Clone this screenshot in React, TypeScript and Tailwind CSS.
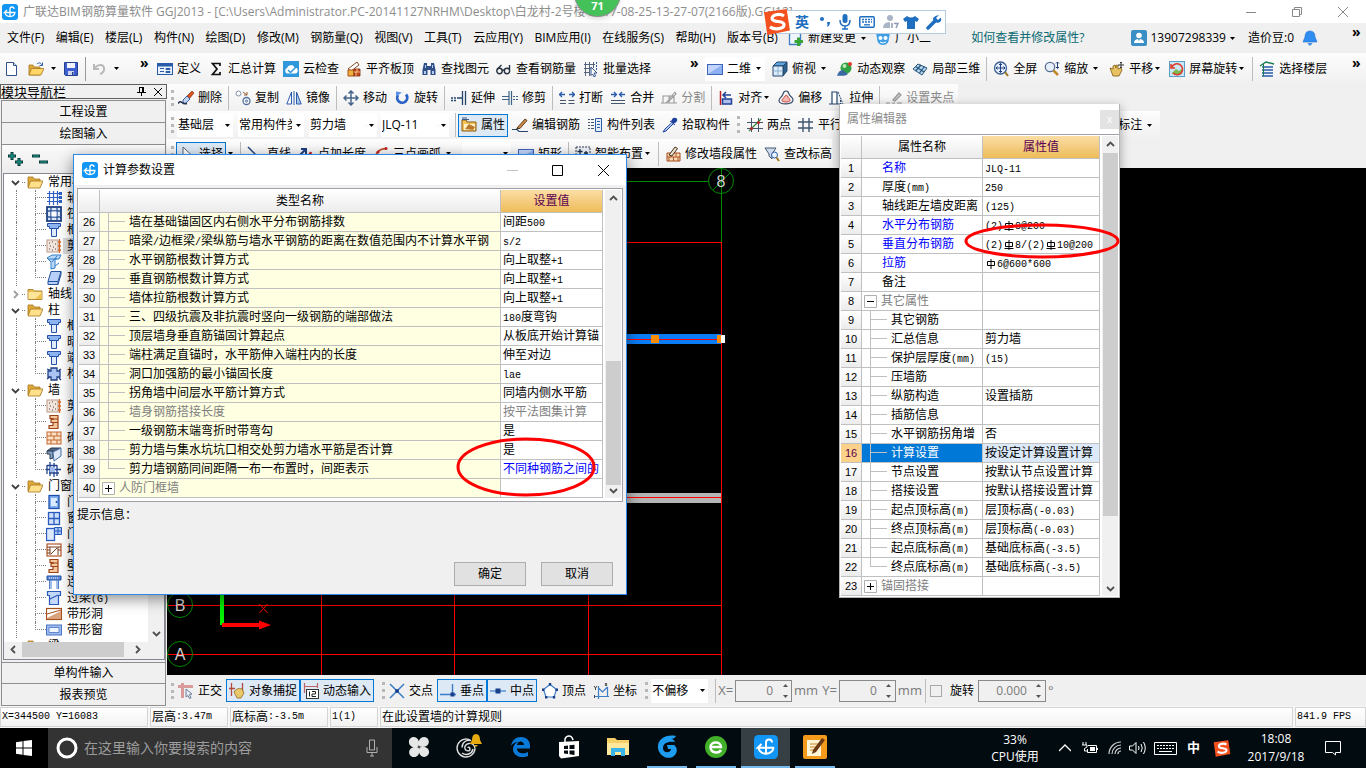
import React from 'react';

const BLUE = '#2a5caa';

const icons: Record<string, React.ReactNode> = {
  app: (
    <>
      <rect width="16" height="16" rx="3" fill="#1296f5" />
      <path d="M8 12.5V5a2 2 0 0 1 4 0M5 6L2.500 8.500H13.500M3 8.500c.8 5.300 9.200 5.300 10 0" fill="none" stroke="#fff" strokeWidth="1.3" />
    </>
  ),
  doc: (
    <>
      <path d="M2.5 1.5h7l3 3v10h-10z" fill="#fff" stroke="#31508a" />
      <path d="M9.5 1.5v3h3" fill="#cfdcf2" stroke="#31508a" />
    </>
  ),
  folderOpen: (
    <>
      <path d="M1 3h5l1 2h6v8H1z" fill="#e0a83a" stroke="#a5761c" strokeWidth=".8" />
      <path d="M3.5 7H16l-3 7H1z" fill="#ffe08a" stroke="#a5761c" strokeWidth=".8" />
    </>
  ),
  openFile: (
    <>
      <path d="M1 4h4l1 2h6v8H1z" fill="#e0a83a" stroke="#a5761c" strokeWidth=".8" />
      <path d="M3.5 7.5H16l-3 6.5H1z" fill="#ffd667" stroke="#a5761c" strokeWidth=".8" />
      <path d="M9 3c2-2 4-1 5 1M14.5 1.5v3h-3" fill="none" stroke={BLUE} />
    </>
  ),
  folder: (
    <>
      <path d="M1 3.5h5L7.5 5H15v8.500H1z" fill="#e9bd52" stroke="#a5761c" strokeWidth=".8" />
      <path d="M1.5 6h13v7h-13z" fill="#ffe59a" />
      <path d="M8 13l6.500-6v6z" fill="#efc04e" />
    </>
  ),
  save: (
    <>
      <path d="M1.5 1.5h13v13h-12l-1-1z" fill="#3d5fd0" stroke="#27408f" />
      <path d="M4 2h8v5H4z" fill="#f2f5ff" />
      <path d="M5 10h6v4H5z" fill="#cfd6ee" />
      <path d="M9 11h1.500v3H9z" fill="#27408f" />
    </>
  ),
  undo: <path d="M2 3v5h5M2.500 8C4 4 11 2 12 7c.5 3-1 5-4 6" fill="none" stroke="#b9b9b9" strokeWidth="2" />,
  define: (
    <>
      <rect x=".5" y="2.5" width="15" height="11" fill="#eaf1fb" stroke={BLUE} />
      <path d="M1 3h14v2.500H1z" fill={BLUE} />
      <path d="M3 7.500h4M3 10.500h4M9 7.500h4v1H9zM9 10.500h4v1H9z" stroke={BLUE} />
    </>
  ),
  sigma: <path d="M12 5V2.500H4.500L9 8l-4.500 5.500H12V11" fill="none" stroke="#111" strokeWidth="1.7" />,
  cloud: (
    <>
      <rect width="16" height="16" fill="#2f97dc" />
      <path d="M4 12.500a3 3 0 0 1 0-5.500 4 4 0 0 1 7.500-.5 3 3 0 0 1 .5 6z" fill="#fff" />
      <path d="M5 9l2.500 2.500L13 6" fill="none" stroke="#2f97dc" strokeWidth="1.5" />
    </>
  ),
  flush: (
    <>
      <path d="M2 8L11 1l2 3-8 6z" fill="#fff" stroke="#8a4b1e" />
      <path d="M2 9h6v6H2z" fill="#f0b13c" stroke="#a5501b" />
      <path d="M8 8h6v7H8z" fill="#c6481d" stroke="#7a2b10" strokeWidth=".8" />
      <path d="M8 11h6M11 8v3M10 11v4" stroke="#ffd8a0" strokeWidth=".8" />
    </>
  ),
  find: (
    <>
      <path d="M3 2h3v3h4V2h3l1.500 7v5H9.500V9h-3v5h-5V9z" fill="#2f4f86" />
      <path d="M3 10h2v3H3zM11 10h2v3h-2zM4 4h1v3H4zM11 4h1v3h-1z" fill="#b7cbef" />
    </>
  ),
  glasses: (
    <g fill="none" stroke="#26323f" strokeWidth="1.4">
      <circle cx="3.5" cy="10" r="2.7" />
      <circle cx="11" cy="10" r="2.7" />
      <path d="M6 9.500q1-1 2.500 0M1.500 8L5.500 4M13.500 9V4" />
    </g>
  ),
  batch: (
    <>
      <path d="M2.500 1v14M6.500 1v14M10.500 1v6M1 3.500h11M1 7.500h8M1 11.500h6" stroke="#55657c" fill="none" />
      <path d="M8 6l6 6h-3l1.500 3-1.500.8L9.500 13 8 14.500z" fill="#fff" stroke="#31508a" />
      <path d="M13.500 1v9" stroke={BLUE} strokeDasharray="2 1" />
    </>
  ),
  rect: (
    <>
      <rect x=".5" y="3.5" width="15" height="10" fill="#8db0f2" stroke="#3d62b8" />
      <path d="M1 13L15 4H1z" fill="#cfe0ff" opacity=".8" />
    </>
  ),
  cube: (
    <>
      <path d="M1 5l4-4h10l-4 4z" fill="#5fa4dc" stroke="#24466b" />
      <path d="M11 5l4-4v9l-4 5z" fill="#2c628f" stroke="#24466b" />
      <path d="M1 5h10v10H1z" fill="#dcecfa" stroke="#24466b" />
      <path d="M6 5v10M1 10h10" stroke="#7fa6c9" strokeWidth=".8" />
    </>
  ),
  orbit: (
    <>
      <circle cx="9" cy="7" r="5.5" fill="#2fa043" />
      <circle cx="7.5" cy="5" r="2" fill="#b9ecb4" />
      <path d="M0 15c1-4 3-6 6-6l5 4c-4 3-8 1-11 2z" fill="#3b6aa3" />
      <circle cx="13" cy="3" r="2" fill="#e23b2b" />
    </>
  ),
  local3d: (
    <>
      <path d="M1 8l5-5 9 4-5 7z" fill="#b5d6ec" stroke="#27557f" />
      <path d="M3.500 5.500l8.500 5.500M9 4l-5.500 6M12.500 5.500L7.500 12" stroke="#27557f" strokeWidth="1.2" />
    </>
  ),
  full: (
    <>
      <circle cx="7.5" cy="7" r="6" fill="#e6effb" stroke="#3c5f93" strokeWidth="1.3" />
      <path d="M7.500 2.500v9M3 7h9M6 4l1.500-1.500L9 4M6 10l1.500 1.500L9 10M4.500 5.500L3 7l1.500 1.500M10.500 5.500L12 7l-1.500 1.500" fill="none" stroke="#1f3f7d" />
      <path d="M12 11l3 4" stroke="#9a7326" strokeWidth="2" />
    </>
  ),
  zoom: (
    <>
      <circle cx="6" cy="6" r="4.7" fill="#e6effb" stroke="#5a6f8f" strokeWidth="1.3" />
      <path d="M9.500 9.500L14 14" stroke="#c08a2b" strokeWidth="2.5" />
      <path d="M13.500 1v6M12 2.500L13.500 1 15 2.500M12 6l1.500 1.500L15 6" fill="none" stroke="#1f3f7d" />
    </>
  ),
  pan: (
    <>
      <path d="M1 7l3 1V5l2-1 1 3V4l2 .5V8l3-1 1 2-3 6H4z" fill="#e8c262" stroke="#8a6a20" strokeWidth=".9" />
      <path d="M12 1v6M9 4h6M11 2l1-1 1 1M11 6l1 1 1-1" fill="none" stroke="#333" />
    </>
  ),
  rotScreen: (
    <>
      <rect x=".5" y=".5" width="15" height="15" fill="#c9e5f6" stroke="#5b9fc9" />
      <path d="M3 12l4-4 3 2 3-2v5H3z" fill="#7cba4e" />
      <path d="M3 6a5.500 5.500 0 1 1 1 6M2 3v4h4" fill="none" stroke="#e0392b" strokeWidth="1.6" />
    </>
  ),
  floors: (
    <>
      <path d="M1 5l6-4 8 2" fill="none" stroke="#1a7d4f" strokeWidth="1.4" />
      <path d="M3 6h11M3 9h11M3 12h11M3 15h11" stroke={BLUE} strokeWidth="1.5" />
      <path d="M4.500 3v12" stroke="#1a7d4f" />
    </>
  ),
  erase: (
    <>
      <path d="M9 6l5-5 2 2-5 6z" fill="#d9541e" stroke="#7d3515" strokeWidth=".7" />
      <path d="M5 10l4-4 3 3-4 4q-2 1-3-1z" fill="#bfd4f3" stroke="#31508a" strokeWidth=".9" />
      <path d="M0 13.500q2-3 4-1t5 1" fill="none" stroke="#26324f" strokeWidth="1.5" />
    </>
  ),
  copy: (
    <g fill="none">
      <circle cx="3.5" cy="3.5" r="2.5" stroke="#8392ab" />
      <circle cx="11.5" cy="11" r="3.5" stroke="#51709f" strokeWidth="1.3" />
      <circle cx="11.5" cy="11" r="1" stroke="#51709f" />
      <path d="M8 2l4 3M12 2v3H9" stroke="#9a5a2f" />
    </g>
  ),
  mirror: (
    <>
      <path d="M5.500 2v12H.8z" fill="#fff" stroke={BLUE} />
      <path d="M10.500 2v12h4.700z" fill="#a9c2ea" stroke={BLUE} />
      <path d="M8 1v14" stroke={BLUE} />
    </>
  ),
  move: (
    <path d="M8 1v14M1 8h14M5.500 3.500L8 1l2.500 2.500M5.500 12.500L8 15l2.500-2.500M3.500 5.500L1 8l2.500 2.500M12.500 5.500L15 8l-2.500 2.500" fill="none" stroke="#46658c" strokeWidth="1.5" />
  ),
  rotate: (
    <>
      <path d="M12 4.500a5 5 0 1 1-8 .5" fill="none" stroke="#2b63c8" strokeWidth="2.8" />
      <path d="M8 2.500l-6-1v5z" fill="#5a8fe8" />
    </>
  ),
  extend: (
    <path d="M14.500 1v14M11.500 1v14M0 8h2M3 8h2M6 8h5M0 10.500h2M3 10.500h2" stroke="#24466b" strokeWidth="1.3" fill="none" />
  ),
  trim: (
    <path d="M7 1v14M9.500 1v14M0 6.500h6.500M0 9.500h6.500M11 6.500h2M14 6.500h2M11 9.500h2M14 9.500h2" stroke="#3d6486" strokeWidth="1.2" fill="none" />
  ),
  brk: (
    <>
      <path d="M0 4.500h6M10 4.500h6M3 2L.5 4.500 3 7M13 2l2.500 2.500L13 7" fill="none" stroke={BLUE} strokeWidth="1.3" />
      <path d="M1 10.500h6M9.500 10.500h6M1 13.500h6M9.500 13.500h6" stroke="#44566e" fill="none" />
    </>
  ),
  merge: (
    <>
      <path d="M1 4.500h5M10 4.500h5M4 2l2.500 2.500L4 7M12 2L9.500 4.500 12 7" fill="none" stroke={BLUE} strokeWidth="1.3" />
      <path d="M1 10.500h14M1 13.500h14" stroke="#44566e" fill="none" />
    </>
  ),
  split: (
    <path d="M2 6h11v7H2zM0 13h16M5 13l9-11M8 6v7M14 2l1 2-8 8" fill="none" stroke="#9a9a9a" strokeWidth="1.1" />
  ),
  align: (
    <>
      <path d="M2.500 1v14" stroke="#c01f1f" strokeWidth="1.5" />
      <path d="M4.500 9h9v5h-9z" fill="#aebfea" stroke="#20429b" strokeWidth="1.5" />
      <path d="M5 5h8M8 2L5 5l3 3" fill="none" stroke="#20429b" strokeWidth="1.5" />
    </>
  ),
  offset: (
    <>
      <path d="M1 11C1 7 4 8 5 4c1-4 5-4 6 0 1 3 4 3 4 6 0 5-14 5-14 1z" fill="none" stroke="#3a4f6d" strokeWidth="1.2" />
      <path d="M4 10.500c0-2 2-2 3-4.500 1-1 2-1 2.500 0 .5 2 2.500 2.500 2.500 4.500 0 2-8 2-8 0z" fill="#f2b7b3" stroke="#c9463f" />
    </>
  ),
  stretch: (
    <>
      <path d="M3 14V2h5v12M0 14h13" fill="#fff" stroke="#24466b" strokeWidth="1.2" />
      <path d="M9 2l5 12M11.500 10v4" stroke="#24466b" strokeDasharray="2 1" fill="none" />
    </>
  ),
  grip: (
    <path d="M0 13h4M6 13h3M11 13h5M7 10l6-7 2 2-6 6z" stroke="#999" fill="#ccc" strokeWidth="1.2" />
  ),
  props: (
    <>
      <path d="M1 3h4l1 2h9v9H1z" fill="#f5c25a" stroke="#8a5a14" />
      <path d="M3 7h11v6H3z" fill="#fff1c4" />
      <path d="M4 12l4-5 6 3-2 3z" fill="#b9792d" />
      <path d="M1 2.500h7M1 1h5" stroke="#3a5a86" />
    </>
  ),
  editBar: (
    <>
      <path d="M0 12.500h5l2 2h9" stroke="#24466b" fill="none" strokeWidth="1.2" />
      <path d="M5 11l8-9 2 1.500-7 8z" fill="#c98c4a" stroke="#5b3412" strokeWidth=".9" />
      <path d="M5 11l3 .5L3 13z" fill="#222" />
    </>
  ),
  list: (
    <>
      <path d="M8.500 1.500h6v13h-6z" fill="#e6eefb" stroke={BLUE} />
      <path d="M10 4.500h3M10 7.500h3M10 10.500h3" stroke={BLUE} />
      <path d="M1 2.500h2M4 2.500h3M1 5.500h2M4 5.500h3M1 8.500h2M4 8.500h3M1 11.500h2M4 11.500h3" stroke="#44566e" />
    </>
  ),
  picker: (
    <>
      <path d="M9 4l2-3q3-1 4 1 1 2-2 4l-2 1z" fill="#20429b" />
      <path d="M8 4l5 4M9.500 6L3 12l-2 3 3-1 7-7" fill="#b9d2f2" stroke="#20429b" />
    </>
  ),
  twoPt: (
    <>
      <path d="M4.500 1v14M11.500 1v14M0 5.500h16M0 11.500h16" stroke="#44566e" />
      <path d="M2 14L14 2" stroke="#2c8a3d" strokeWidth="1.3" />
      <circle cx="11.5" cy="5.5" r="1.5" fill="#c01f1f" />
      <circle cx="4.5" cy="11.5" r="1.5" fill="#c01f1f" />
    </>
  ),
  parallel: <path d="M5 1v14M11 1v14M0 5h15M0 11h15" stroke="#3f5570" strokeWidth="1.4" />,
  pointer: <path d="M4 1v12l3-3 2 5 2-1-2-4.500h4z" fill="#fff" stroke="#55657c" />,
  line: <path d="M1 1l13 13" stroke="#1f3f7d" strokeWidth="1.5" />,
  addLen: (
    <>
      <path d="M2 9l6-6M3 3h5v5" fill="none" stroke="#1f3f7d" strokeWidth="2" />
      <path d="M13 6v8M11 8l2-2" stroke="#c01f1f" strokeWidth="1.5" />
    </>
  ),
  arc: (
    <>
      <path d="M2 14C2 7 6 3 13 2.500" fill="none" stroke="#c0502f" strokeWidth="1.5" />
      <circle cx="13" cy="2.5" r="1.5" fill="#c01f1f" />
      <circle cx="5" cy="6" r="1.5" fill="#c01f1f" />
    </>
  ),
  smart: (
    <>
      <rect x="1" y="1" width="14" height="14" fill="#eef2f8" stroke="#333f52" strokeDasharray="2 1" />
      <path d="M5 3v5M2.500 5.500h5M11 5v4M9 7h4M6 10v4M4 12h4" stroke="#1c2d4c" strokeWidth="1.3" />
    </>
  ),
  wallEdit: (
    <>
      <path d="M2 7h13v8H2z" fill="#fbd9b4" stroke="#a34c1b" />
      <path d="M2 11h13M6 7v4M11 7v4M4 11v4M8.500 11v4M13 11v4" stroke="#a34c1b" strokeWidth=".9" />
      <path d="M4 9l6-8 2.500 1.500L7 10z" fill="#e8e0cf" stroke="#4a2f16" />
    </>
  ),
  elev: (
    <>
      <path d="M1 2h11L8 8v5l-3-3V8z" fill="#cfdbee" stroke="#44566e" />
      <circle cx="10.5" cy="9" r="3" fill="#eaf3ff" stroke={BLUE} />
      <path d="M12.500 11.500L15 15" stroke="#a5761c" strokeWidth="2" />
    </>
  ),
  newChange: (
    <>
      <path d="M1.500 1.500h9l2 2v11h-11z" fill="#eef5fd" stroke="#3b7dbf" strokeWidth="1.3" />
      <path d="M9 7.500h3V10h3v3h-3v3H9v-3H6.500v-3H9z" fill="#35a535" />
    </>
  ),
  mascot: (
    <>
      <path d="M1 3l4 1q3-1 6 0l4-1-1 5q0 7-6 7T2 8z" fill="#3f9fe6" />
      <circle cx="5.5" cy="8" r="2" fill="#fff" />
      <circle cx="10.5" cy="8" r="2" fill="#fff" />
      <path d="M5 12q3 2 6 0" stroke="#fff" fill="none" />
    </>
  ),
  user: (
    <>
      <rect width="16" height="16" rx="2" fill="#3a8fc4" />
      <circle cx="8" cy="5.5" r="2.8" fill="#fff" />
      <path d="M3 13q0-4 5-4t5 4z" fill="#fff" />
      <path d="M7 9l1 2 1-2z" fill="#3a8fc4" />
    </>
  ),
  bell: <path d="M8 1q5 0 5 6l2 5H1l2-5q0-6 5-6zM6 13.500h4L8 15.500z" fill="#2f8df0" stroke="#1d6fd0" strokeWidth=".6" />,
  ortho: (
    <>
      <path d="M0 3.500h15M4.500 0v15" stroke="#d99a9a" strokeWidth="3" />
      <path d="M8 6l6 5-2.500.5L13 15l-1.500.5-1.500-3L8 14z" fill="#e9eef6" stroke="#6c7f9a" />
    </>
  ),
  snap: (
    <>
      <path d="M2.500 0v13M13.500 0v10M0 5.500h6" stroke="#b34a3f" strokeWidth="1.3" />
      <path d="M5 9q3-5 8-3l2 4-3 5H8z" fill="#eac76b" stroke="#8d6b21" strokeWidth=".8" />
    </>
  ),
  dynIn: (
    <>
      <path d="M1 3.500h14M1.500 0v10M14.500 0v5" stroke="#b66" strokeWidth="1.2" />
      <rect x="3.5" y="6.5" width="12" height="9" fill="#fff" stroke="#333" />
      <path d="M6.500 8.500v5M9 8.500h3.500V11H9v2.500h4" stroke="#222" fill="none" />
    </>
  ),
  cross: (
    <>
      <path d="M1 1l14 14M15 1L1 15" stroke="#3d7dc8" strokeWidth="1.5" />
      <circle cx="8" cy="8" r="2" fill="#173f8a" />
    </>
  ),
  perp: (
    <>
      <path d="M0 11.500h16M12.500 1v11" stroke="#3d7dc8" strokeWidth="1.4" />
      <rect x="10.5" y="9.5" width="4" height="4" fill="#173f8a" />
    </>
  ),
  mid: (
    <>
      <path d="M0 8h16" stroke="#5b93d6" strokeWidth="1.5" />
      <rect x="5.5" y="5.5" width="5" height="5" fill="#173f8a" />
    </>
  ),
  vertex: (
    <>
      <path d="M8 1.500l6.500 5L12 14H4L1.500 6.500z" fill="#fff" stroke="#3d7dc8" strokeWidth="1.2" />
      <path d="M6.800 0h2.400v2.400H6.800zM0 5.500h2.400v2.400H0zM13.500 5.500H16v2.400h-2.500zM3 13h2.400v2.400H3zM10.800 13h2.400v2.400h-2.400z" fill="#173f8a" />
    </>
  ),
  coord: (
    <>
      <path d="M5.500 3v13M2 13.500h14M5.500 5l4 4 5-5M14.500 4v10" fill="none" stroke="#3d7dc8" strokeWidth="1.2" />
      <path d="M1 3l1.500 2L4 3M2.500 5v2M1.500 12v3M12 0l2 3M14 0l-2 3" stroke="#333" fill="none" strokeWidth=".9" />
    </>
  ),
  axisNet: (
    <path d="M3.500 1v14M7.500 1v14M11.500 1v14M1 3.500h14M1 7.500h14M1 11.500h14M13.500 2.500h2v2h-2zM13.500 6.500h2v2h-2zM13.500 10.500h2v2h-2z" fill="none" stroke="#2f62c4" strokeWidth="1.2" />
  ),
  raft: (
    <>
      <rect x="1" y="1" width="14" height="14" fill="#dbe8fb" stroke="#1c3f80" strokeWidth="1.8" />
      <path d="M5 1v14M11 1v14M1 5h14M1 11h14" stroke="#2c5494" strokeWidth="1.3" />
      <rect x="5.5" y="5.5" width="5" height="5" fill="#fff" />
    </>
  ),
  column: (
    <>
      <path d="M1.500 1.500h13v3h-2v2h-9v-2h-2z" fill="#8eb4f4" stroke="#2450a8" />
      <path d="M5.500 6.500h5v8h-5z" fill="#dfeafd" stroke="#2450a8" />
    </>
  ),
  shear: (
    <>
      <rect x="1" y="2" width="11" height="12" fill="#f5e6dd" stroke="#b99a8a" />
      <path d="M3 5h1M6 4h1M9 6h1M4 8h1M7 9h1M3 11h1M9 11h1M6 12h1" stroke="#444" strokeWidth="1.2" />
      <path d="M13.500 1v14M12 4h3M12 8h3M12 12h3" stroke="#d26a2a" strokeWidth="1.3" />
    </>
  ),
  beam: (
    <>
      <path d="M1 4l5-3h9l-2 4H9v9l-4 1V8z" fill="#bcd9f7" stroke="#2f7cc8" />
      <path d="M2 5h9M6 8l5-6M9 12l4-3" stroke="#2f7cc8" />
    </>
  ),
  slab: <path d="M5 1.500h10l-3 10H2zM2 11.500v3h10v-3M12 14.500l3-10v-3" fill="#b8d0fa" stroke="#24509c" />,
  strCol: (
    <path d="M5 2h6v3h3v6h-3v3H5v-3H2V5h3zM1 3l3 1M1 13l3-2M13 4l2-1M13 12l2 2" fill="#a9c4f2" stroke="#213f86" strokeWidth="1.3" />
  ),
  niche: (
    <>
      <path d="M4 1.500h8v13H3v-3h4v-3H5v-3h2v-1H4z" fill="#f7c79d" stroke="#9c4418" strokeWidth="1.2" />
      <path d="M7 8.500h5M7 5h5" stroke="#9c4418" />
    </>
  ),
  brick: (
    <>
      <rect x="1" y="2" width="14" height="12" fill="#fbe0c8" stroke="#c5682e" />
      <path d="M1 6h14M1 10h14M5 2v4M11 2v4M8 6v4M5 10v4M11 10v4" stroke="#c5682e" />
    </>
  ),
  darkBeam: (
    <>
      <path d="M1 5l4-3h10l-4 4z" fill="#50657f" stroke="#2a3a52" />
      <path d="M1 5h6v7l-3 1V8H1z" fill="#8aa0c0" stroke="#2a3a52" />
      <path d="M7 6l8-4v8l-7 5z" fill="#dfe9f7" stroke="#4470a8" />
    </>
  ),
  tie: (
    <>
      <path d="M1 3.500h10M1 3v9M11 3v11M0 7.500h15M4 0v14M8 1v14M3 11h10" fill="none" stroke="#23458f" strokeWidth="1.3" />
      <path d="M4 5h5v5H4z" fill="#9fb9ea" />
    </>
  ),
  door: (
    <>
      <rect x="3" y="1.5" width="10" height="13" fill="#7fb0f5" stroke="#1f4fa8" strokeWidth="1.3" />
      <rect x="5" y="4" width="6" height="8" fill="#dceaff" />
      <path d="M10.500 7v2" stroke="#1f4fa8" strokeWidth="1.5" />
    </>
  ),
  win: (
    <>
      <rect x="2.5" y="2.5" width="11" height="12" fill="#cfe0fb" stroke="#2a5bbd" strokeWidth="1.3" />
      <path d="M8 3v11M3 8.500h10" stroke="#2a5bbd" strokeWidth="1.3" />
    </>
  ),
  doorWin: (
    <>
      <rect x=".5" y="2.5" width="8" height="12" fill="#dceaff" stroke="#2a5bbd" strokeWidth="1.3" />
      <path d="M8.500 1.500h7v7h-7zM12 1.500v7M8.500 5h7" fill="#a8c6f8" stroke="#2a5bbd" />
    </>
  ),
  hole: (
    <>
      <rect x="1" y="2" width="14" height="12" fill="#fff" stroke="#b4552a" strokeWidth="1.2" />
      <path d="M1 5h3M1 8h3M1 11h3M12 5h3M12 8h3M4 13V5h8v8M5 12l6-6" fill="none" stroke="#7a3b1b" />
    </>
  ),
  linkBeam: (
    <>
      <path d="M1 2h14v4H1z" fill="#5c8cd8" stroke="#1f4f9f" />
      <path d="M3.500 6v9M5 6v9M11 6v9M12.500 6v9" stroke="#4d7fcc" />
      <path d="M3 4h10" stroke="#fff" strokeDasharray="1 1" />
    </>
  ),
  lintel: <path d="M1.500 1.500h13v4h-2v9h-9v-9h-2zM4 9l8-4" fill="#c5dafa" stroke="#2a5bbd" strokeWidth="1.2" />,
  bandHole: (
    <>
      <rect x=".5" y="2.5" width="15" height="11" fill="#fff" stroke="#a5501b" strokeWidth="1.2" />
      <path d="M1 12L15 5v8H1z" fill="#d9a27c" />
      <path d="M1 8l14-4" stroke="#a5501b" />
    </>
  ),
  bandWin: (
    <>
      <rect x=".5" y="3" width="15" height="10" fill="#9dbbf2" stroke="#4a74c0" />
      <path d="M3 5.500h10v5H3z" fill="#eef4ff" stroke="#4a74c0" strokeWidth=".8" />
    </>
  ),
};

function Icon({ name }: { name: string }) {
  return (
    <svg viewBox="0 0 16 16" className="size-4 shrink-0" aria-hidden="true">
      {icons[name]}
    </svg>
  );
}

function Caret({ className = 'w-[9px]' }: { className?: string }) {
  return (
    <span className={`flex shrink-0 justify-center ${className}`}>
      <svg viewBox="0 0 5 3" className="h-[3px] w-[5px]" aria-hidden="true">
        <path d="M0 0h5L2.500 3z" fill="#000" />
      </svg>
    </span>
  );
}

const Sep = () => <span className="-mx-px h-6 w-px shrink-0 bg-[#bdbdbd]" />;
const Grip = () => <span className="-mr-[3px] h-4 w-0 shrink-0 border-l-3 border-dotted border-[#b8b8b8]" />;
const More = ({ className = '' }: { className?: string }) => (
  <button aria-label="更多" className={`h-6 w-2 shrink-0 pb-3 text-sm leading-3 font-bold ${className}`}>»</button>
);

interface ToolProps {
  icon: string;
  label: string;
  caret?: 'near' | 'far';
  pressed?: boolean;
  disabled?: boolean;
}

function Tool({ icon, label, caret, pressed, disabled }: ToolProps) {
  return (
    <button
      disabled={disabled}
      aria-pressed={pressed}
      className={`flex shrink-0 items-center whitespace-nowrap ${disabled ? 'text-[#8a8a8a]' : ''} ${
        pressed ? 'h-[23px] border border-[#0078d7] bg-[#dde9f5] px-[2px]' : ''
      }`}
    >
      <Icon name={icon} />
      <span className="ml-1">{label}</span>
      {caret && <Caret className={caret === 'near' ? 'w-[9px]' : 'w-[14px]'} />}
    </button>
  );
}

function Combo({ label, value, className }: { label: string; value: string; className: string }) {
  return (
    <span className={`flex h-6 shrink-0 items-center bg-white ${className}`}>
      <select aria-label={label} defaultValue={value} className="min-w-0 flex-1 appearance-none overflow-hidden pl-px outline-none">
        <option>{value}</option>
      </select>
      <Caret className="w-3 bg-[#fbfbfb]" />
    </span>
  );
}

// Latin runs are set half as wide as a Chinese character
function Grid({ text }: { text: string }) {
  return (
    <>
      {text.split(/([\x20-\x7e]+|[ΦΨ])/).map((part, i) => {
        if (part === 'Φ' || part === 'Ψ') {
          return (
            <svg key={i} viewBox="0 0 12 12" className="inline size-3 align-[-3px]" aria-label={part}>
              <path d={part === 'Ψ' ? 'M2.500 3.500h7v4h-7zM6 1v10M1.500 9.500h9' : 'M2.500 3.500h7v4h-7zM6 1v10'} fill="none" stroke="currentColor" />
            </svg>
          );
        }
        return i % 2 ? (
          <span key={i} className="font-['Liberation_Mono','Noto_Sans_CJK_SC',monospace] text-[10px] leading-none whitespace-pre">{part}</span>
        ) : (
          part
        );
      })}
    </>
  );
}

const menus = ['文件(F)', '编辑(E)', '楼层(L)', '构件(N)', '绘图(D)', '修改(M)', '钢筋量(Q)', '视图(V)', '工具(T)', '云应用(Y)', 'BIM应用(I)', '在线服务(S)', '帮助(H)', '版本号(B)'];

function TitleBar() {
  return (
    <header className="flex h-[23px] shrink-0 items-center bg-white pl-[2px] text-[#8d8d8d]">
      <Icon name="app" />
      <h1 className="ml-[5px] flex-1 truncate">
        广联达BIM钢筋算量软件 GGJ2013 - [C:\Users\Administrator.PC-20141127NRHM\Desktop\白龙村-2号楼-2017-08-25-13-27-07(2166版).GGJ12]
      </h1>
      <button aria-label="最小化" className="w-[46px]">
        <svg viewBox="0 0 10 10" className="mx-auto size-[10px]"><path d="M0 5.500h10" stroke="#888" /></svg>
      </button>
      <button aria-label="还原" className="w-[46px]">
        <svg viewBox="0 0 10 10" className="mx-auto size-[10px]"><path d="M.5 2.500h7v7h-7zM2.500 2V.5h7v7H8" fill="none" stroke="#888" /></svg>
      </button>
      <button aria-label="关闭" className="w-[46px]">
        <svg viewBox="0 0 10 10" className="mx-auto size-[10px]"><path d="M0 0l10 10M10 0L0 10" stroke="#888" /></svg>
      </button>
    </header>
  );
}

function MenuBar() {
  return (
    <nav className="flex h-[30px] shrink-0 items-center pl-[7px]">
      <div className="flex w-[771px] shrink-0 justify-between">
        {menus.map((m) => (
          <button key={m} className="whitespace-nowrap">{m}</button>
        ))}
      </div>
      <div className="ml-[10px] flex shrink-0 items-center gap-[5px]">
        <Tool icon="newChange" label="新建变更" caret="far" />
        <Tool icon="mascot" label="广小二" />
      </div>
      <a href="#help" className="ml-auto whitespace-nowrap text-[#0a6a72]">如何查看并修改属性?</a>
      <div className="ml-[46px] flex shrink-0 items-center">
        <Tool icon="user" label="13907298339" caret="far" />
        <span className="ml-2 whitespace-nowrap">造价豆:0</span>
        <span className="ml-2"><Icon name="bell" /></span>
      </div>
      <More className="mr-[6px] ml-[34px]" />
    </nav>
  );
}

function MainToolbar() {
  return (
    <div className="flex h-[31px] shrink-0 items-center bg-linear-to-b from-[#fdfdfd] to-[#f0f0f0] pl-1">
      <div className="flex w-[153px] shrink-0 items-center">
        <button aria-label="新建"><Icon name="doc" /></button>
        <button aria-label="打开" className="ml-2 flex items-center"><Icon name="openFile" /><Caret className="w-[18px]" /></button>
        <button aria-label="保存" className="ml-px"><Icon name="save" /></button>
        <span className="ml-[6px] h-6 w-px bg-[#9a9a9a]" />
        <button aria-label="撤销" className="ml-[6px] flex items-center"><Icon name="undo" /><Caret className="w-4" /></button>
        <More className="mr-[9px] ml-auto" />
      </div>
      <div className="flex items-center gap-[7px]">
        <Tool icon="define" label="定义" />
        <Tool icon="sigma" label="汇总计算" />
        <Tool icon="cloud" label="云检查" />
        <Tool icon="flush" label="平齐板顶" />
        <Tool icon="find" label="查找图元" />
        <Tool icon="glasses" label="查看钢筋量" />
        <Tool icon="batch" label="批量选择" />
      </div>
      <More className="ml-[39px]" />
      <div className="ml-[7px] flex items-center gap-[7px]">
        <span className="flex h-6 w-[60px] items-center bg-white pl-[2px]"><Tool icon="rect" label="二维" caret="far" /></span>
        <Tool icon="cube" label="俯视" caret="far" />
        <Tool icon="orbit" label="动态观察" />
        <Tool icon="local3d" label="局部三维" />
        <Sep />
        <Tool icon="full" label="全屏" />
        <Tool icon="zoom" label="缩放" caret="far" />
        <Tool icon="pan" label="平移" caret="near" />
        <Tool icon="rotScreen" label="屏幕旋转" caret="near" />
        <Sep />
        <Tool icon="floors" label="选择楼层" />
      </div>
      <More className="mr-[6px] ml-auto" />
    </div>
  );
}

const strip = 'flex w-max shrink-0 items-center gap-[7px] bg-linear-to-b from-[#fdfdfd] to-[#f0f0f0] pl-1';

function DrawToolbars() {
  return (
    <div className="flex shrink-0 flex-col overflow-hidden">
      <div className={`${strip} h-[27px] pr-1`}>
        <Grip />
        <Tool icon="erase" label="删除" />
        <Sep />
        <Tool icon="copy" label="复制" />
        <Tool icon="mirror" label="镜像" />
        <Sep />
        <Tool icon="move" label="移动" />
        <Tool icon="rotate" label="旋转" />
        <Sep />
        <Tool icon="extend" label="延伸" />
        <Tool icon="trim" label="修剪" />
        <Sep />
        <Tool icon="brk" label="打断" />
        <Tool icon="merge" label="合并" />
        <Tool icon="split" label="分割" disabled />
        <Sep />
        <Tool icon="align" label="对齐" caret="near" />
        <Tool icon="offset" label="偏移" />
        <Tool icon="stretch" label="拉伸" />
        <Sep />
        <Tool icon="grip" label="设置夹点" disabled />
      </div>
      <div className={`${strip} h-7`}>
        <Grip />
        <Combo label="楼层" value="基础层" className="-ml-px w-[56px]" />
        <Combo label="构件类别" value="常用构件类型" className="-ml-[2px] w-[66px]" />
        <Combo label="构件类型" value="剪力墙" className="-ml-[2px] w-[68px]" />
        <Combo label="构件名称" value="JLQ-11" className="-ml-[3px] w-[68px]" />
        <Sep />
        <span className="-ml-1"><Tool icon="props" label="属性" pressed /></span>
        <span className="-ml-[3px]"><Tool icon="editBar" label="编辑钢筋" /></span>
        <Tool icon="list" label="构件列表" />
        <Tool icon="picker" label="拾取构件" />
        <span className="mr-[3px]"><Grip /></span>
        <Tool icon="twoPt" label="两点" />
        <Tool icon="parallel" label="平行" />
        <Tool icon="line" label="点角" caret="near" />
        <Tool icon="arc" label="三点辅轴" caret="near" />
        <Tool icon="split" label="删除辅轴" />
        <span className="pr-1 pl-[30px]"><Tool icon="align" label="标注" caret="far" /></span>
      </div>
      <div className={`${strip} h-[29px]`}>
        <Grip />
        <span className="-ml-[2px] flex items-center"><Tool icon="pointer" label="选择" pressed /><Caret className="w-2" /></span>
        <Sep />
        <Tool icon="line" label="直线" />
        <Tool icon="addLen" label="点加长度" />
        <Tool icon="arc" label="三点画弧" caret="far" />
        <Combo label="偏移方式" value="" className="w-[49px]" />
        <Tool icon="rect" label="矩形" />
        <Sep />
        <Tool icon="smart" label="智能布置" caret="near" />
        <Sep />
        <Tool icon="wallEdit" label="修改墙段属性" />
        <Tool icon="elev" label="查改标高" />
      </div>
    </div>
  );
}

const tree: { name: string; closed?: boolean; items: [string, string][] }[] = [
  {
    name: '常用构件类型',
    items: [['axisNet', '轴网(J)'], ['raft', '筏板基础(M)'], ['column', '框柱(Z)'], ['shear', '剪力墙(Q)'], ['beam', '梁(L)'], ['slab', '现浇板(B)']],
  },
  { name: '轴线', closed: true, items: [] },
  { name: '柱', items: [['column', '框柱(Z)'], ['column', '暗柱(Z)'], ['column', '端柱(Z)'], ['strCol', '构造柱(Z)']] },
  { name: '墙', items: [['shear', '剪力墙(Q)'], ['niche', '人防门框墙(RF)'], ['brick', '砌体墙(Q)'], ['darkBeam', '暗梁(A)'], ['tie', '砌体加筋(Y)']] },
  {
    name: '门窗洞',
    items: [['door', '门(M)'], ['win', '窗(C)'], ['doorWin', '门联窗(A)'], ['hole', '墙洞(D)'], ['niche', '壁龛(I)'], ['linkBeam', '连梁(G)'], ['lintel', '过梁(G)'], ['bandHole', '带形洞'], ['bandWin', '带形窗']],
  },
  { name: '梁', items: [] },
];

function Arrow({ dir, color = '#505050' }: { dir: 'up' | 'down' | 'left' | 'right'; color?: string }) {
  const d = { up: 'M1 6l3.500-3.500L8 6', down: 'M1 3l3.500 3.500L8 3', left: 'M6 1L2.500 4.500 6 8', right: 'M3 1l3.500 3.500L3 8' }[dir];
  return (
    <svg viewBox="0 0 9 9" className="size-[9px] shrink-0" aria-hidden="true">
      <path d={d} fill="none" stroke={color} strokeWidth="1.8" />
    </svg>
  );
}

function NavPanel() {
  const bar = 'h-[22px] shrink-0 border-b border-[#8e8e8e] bg-[#f0f0f0]';
  return (
    <aside className="flex w-[167px] shrink-0 flex-col">
      <div className="flex h-[15px] shrink-0 items-center border border-[#606060] text-[13px] leading-3">
        <span className="flex-1">模块导航栏</span>
        <svg viewBox="0 0 9 9" className="mr-2 size-[9px]"><path d="M2.500 0v5M2 .5h4M5.500 0v5M6.500 0v5M0 5.500h9M4.500 6v3" stroke="#000" fill="none" /></svg>
        <svg viewBox="0 0 8 8" className="mr-1 size-2"><path d="M0 0l8 8M8 0L0 8" stroke="#000" /></svg>
      </div>
      <div className="mt-px mr-px ml-px flex min-h-0 flex-1 flex-col border-x border-t border-[#8e8e8e]">
        <button className={bar}>工程设置</button>
        <button className={bar}>绘图输入</button>
        <div className="flex h-7 shrink-0 items-center gap-2 bg-linear-to-b from-[#fafafa] to-[#ececec] pl-[6px]">
          <button aria-label="展开">
            <svg viewBox="0 0 16 14" className="h-[14px] w-4"><path d="M0 4h8M4 0v8M7 10h8M11 6v8" stroke="#063b3b" strokeWidth="3" /><path d="M1 4h6M4 1v6M8 10h6M11 7v6" stroke="#1ea596" /></svg>
          </button>
          <button aria-label="折叠">
            <svg viewBox="0 0 16 14" className="h-[14px] w-4"><path d="M0 4h8M7 10h9" stroke="#063b3b" strokeWidth="3" /><path d="M1 4h6M8 10h7" stroke="#1ea596" /></svg>
          </button>
        </div>
        <div className="mb-[2px] ml-px flex min-h-0 flex-1 flex-col border border-[#828790] bg-white">
          <div className="flex min-h-0 flex-1">
            <ul className="min-w-0 flex-1 overflow-hidden">
              {tree.map((group) => (
                <li key={group.name}>
                  <div className="flex h-4 items-center whitespace-nowrap pl-[7px]">
                    <Arrow dir={group.closed ? 'right' : 'down'} color={group.closed ? '#a0a0a0' : '#404040'} />
                    <span className="mx-[2px] w-[3px] border-t border-dotted border-[#808080]" />
                    <Icon name={group.closed ? 'folder' : 'folderOpen'} />
                    <span className="ml-[5px]">{group.name}</span>
                  </div>
                  <ul>
                    {group.items.map(([icon, label], i) => (
                      <li key={label + i} className="flex h-4 items-center whitespace-nowrap pl-3">
                        <span className="h-4 w-[19px] shrink-0 border-l border-dotted border-[#808080]" />
                        <span className="flex h-4 w-[11px] shrink-0 flex-col">
                          <span className="h-2 border-b border-l border-dotted border-[#808080]" />
                          {i < group.items.length - 1 && <span className="h-2 border-l border-dotted border-[#808080]" />}
                        </span>
                        <Icon name={icon} />
                        <span className={label === '剪力墙(Q)' && group.name === '常用构件类型' ? 'ml-px bg-[#d9d9d9] px-1' : 'ml-[5px]'}>
                          <Grid text={label} />
                        </span>
                      </li>
                    ))}
                  </ul>
                </li>
              ))}
            </ul>
            <div className="flex w-4 shrink-0 flex-col items-center justify-between bg-[#f0f0f0] py-1">
              <Arrow dir="up" />
              <Arrow dir="down" />
            </div>
          </div>
          <div className="flex h-[17px] shrink-0 bg-[#f0f0f0]">
            <span className="flex h-[15px] w-[18px] items-center justify-center"><Arrow dir="left" /></span>
            <span className="h-[15px] w-[102px] bg-[#cdcdcd]" />
            <span className="ml-[9px] flex h-[15px] items-center"><Arrow dir="right" /></span>
          </div>
        </div>
        <button className={`${bar} border-t`}>单构件输入</button>
        <button className={bar}>报表预览</button>
      </div>
    </aside>
  );
}

function AxisBubble({ x, y, label }: { x: number; y: number; label: string }) {
  return (
    <g>
      <circle cx={x} cy={y} r="12.5" fill="none" stroke="#008a00" />
      <text x={x} y={y + 6} textAnchor="middle" fill="#d0d0d0" fontSize="16" fontFamily="Liberation Sans, sans-serif">{label}</text>
    </g>
  );
}

function Drawing() {
  return (
    <div className="min-h-0 flex-1 overflow-hidden bg-black">
      <svg width="1199" height="507" viewBox="167 168 1199 507" className="max-w-none" role="img" aria-label="平面图">
        <path d="M167 181h542v1H167zM721 168h1v74h-1z" fill="#008a00" />
        <path d="M600 493h121v10H600z" fill="#b4b4b4" />
        <path d="M600 334h121v10H600z" fill="#0a7cf5" />
        <path
          d="M167 242h555v1H167zM721 242h1v433h-1zM167 605h555v1H167zM167 654h555v1H167zM321 500h1v175h-1zM454 500h1v175h-1zM588 500h1v175h-1zM600 497h121v1H600zM600 339h121v1H600z"
          fill="#ff0000"
        />
        <path d="M651 335h8v8h-8zM717 335h4v8h-4z" fill="#ff8c00" />
        <path d="M721 335h4v8h-4z" fill="#fff" />
        <path d="M220 590h4v35h-4z" fill="#00f000" />
        <path d="M222 623h38v4h-38z" fill="#ff0000" />
        <path d="M259 620.500l12 4.500-12 4.500z" fill="#ff0000" />
        <path d="M259.500 604l8 9M267.500 604l-8 9" stroke="#ff0000" />
        <path d="M713 190l17-17" stroke="#008a00" />
        <AxisBubble x={721} y={181} label="8" />
        <AxisBubble x={180} y={605} label="B" />
        <AxisBubble x={180} y={654} label="A" />
      </svg>
    </div>
  );
}

function Spin({ label, value, className }: { label: string; value: string; className: string }) {
  return (
    <span className={`flex h-[22px] items-center border border-[#8a8a8a] bg-[#f0f0f0] text-xs text-[#7a7a7a] ${className}`}>
      <input aria-label={label} defaultValue={value} className="w-0 flex-1 pr-[6px] text-right outline-none" />
      <span className="flex h-full w-3 flex-col items-center justify-between py-[3px]">
        <svg viewBox="0 0 5 3" className="h-[3px] w-[5px]"><path d="M0 3h5L2.500 0z" fill="#555" /></svg>
        <svg viewBox="0 0 5 3" className="h-[3px] w-[5px]"><path d="M0 0h5L2.500 3z" fill="#555" /></svg>
      </span>
    </span>
  );
}

function SnapToolbar() {
  return (
    <div className="flex h-[31px] shrink-0 items-center pl-1">
      <Grip />
      <span className="ml-[7px] flex shrink-0 items-center gap-1">
        <Tool icon="ortho" label="正交" />
        <span className="flex">
          <Tool icon="snap" label="对象捕捉" pressed />
          <Tool icon="dynIn" label="动态输入" pressed />
        </span>
      </span>
      <span className="ml-2 flex shrink-0 items-center gap-1">
        <span className="mr-[3px]"><Grip /></span>
        <Tool icon="cross" label="交点" />
        <span className="flex">
          <Tool icon="perp" label="垂点" pressed />
          <Tool icon="mid" label="中点" pressed />
        </span>
        <span className="ml-px"><Tool icon="vertex" label="顶点" /></span>
        <span className="ml-[3px]"><Tool icon="coord" label="坐标" /></span>
      </span>
      <span className="ml-2 flex shrink-0 items-center gap-[3px]">
        <span className="mr-[3px]"><Grip /></span>
        <Combo label="偏移" value="不偏移" className="w-[57px]" />
      </span>
      <div className="ml-2 flex shrink-0 items-center gap-[2px] text-[13px] text-[#7a7a7a]">
        <Sep />
        <span className="ml-px">X=</span>
        <Spin label="X" value="0" className="w-[57px]" />
        <span>mm</span>
        <span className="ml-[2px]">Y=</span>
        <Spin label="Y" value="0" className="w-[57px]" />
        <span className="mr-[2px]">mm</span>
        <Sep />
        <label className="ml-[3px] flex items-center gap-2 text-xs text-black">
          <input type="checkbox" className="size-3 appearance-none border border-[#a8a8a8]" />
          旋转
        </label>
        <Spin label="旋转角度" value="0.000" className="ml-[2px] w-[68px]" />
        <span>°</span>
      </div>
    </div>
  );
}

function StatusBar() {
  const cell = 'flex h-5 items-center border border-[#d4d4d4] bg-linear-to-b from-white to-[#f2f2f2] pl-px whitespace-nowrap';
  return (
    <footer className="flex h-[22px] shrink-0 items-center gap-[2px] bg-[#f7f7f7]">
      <span className={`${cell} w-[148px]`}><Grid text="X=344500 Y=16083" /></span>
      <span className={`${cell} w-[78px]`}><Grid text="层高:3.47m" /></span>
      <span className={`${cell} w-[98px]`}><Grid text="底标高:-3.5m" /></span>
      <span className={`${cell} w-12`}><Grid text="1(1)" /></span>
      <span className={`${cell} flex-1`}>在此设置墙的计算规则</span>
      <span className={`${cell} w-[71px]`}><Grid text="841.9 FPS" /></span>
    </footer>
  );
}

const sogou = (
  <>
    <path d="M1 3l21-3 3 20-21 4z" fill="#f4511e" />
    <path d="M19.500 6.500c-4-3-12-1-11 2.500 1 4 11 1 11 5.500 0 4-9 5-13 2" fill="none" stroke="#fff" strokeWidth="3" />
  </>
);

function Taskbar() {
  const slot = 'flex h-10 w-[49px] shrink-0 items-center justify-center border-b-2';
  return (
    <div className="flex h-10 shrink-0 items-center bg-[#020b0f] text-white">
      <button aria-label="开始" className="flex h-10 w-12 items-center justify-center bg-black">
        <svg viewBox="0 0 16 16" className="size-4"><path d="M0 2.200l6.500-1v6.300H0zM7.500 1L16 0v7.500H7.500zM0 8.500h6.500v6.300L0 13.800zM7.500 8.500H16V16l-8.500-1z" fill="#fff" /></svg>
      </button>
      <div className="flex h-10 w-[344px] items-center bg-[#333] pl-2">
        <svg viewBox="0 0 22 22" className="size-[22px]"><circle cx="11" cy="11" r="9" fill="none" stroke="#fff" strokeWidth="3" /></svg>
        <input aria-label="搜索" placeholder="在这里输入你要搜索的内容" className="ml-[6px] w-0 flex-1 text-sm outline-none placeholder:text-[#9c9c9c]" />
        <svg viewBox="0 0 12 18" className="mr-[14px] h-[18px] w-3"><path d="M3.500 1h5v10h-5zM1 8v5.500h10V8M6 14v3M4 17h4" fill="none" stroke="#b0b0b0" /></svg>
      </div>
      <button aria-label="快速启动" className={`${slot} ml-[2px] border-transparent`}>
        <svg viewBox="0 0 24 24" className="size-[22px]">
          <path d="M11.500 11.500C6 14 1 11 1 6.500S6 0 9 2s3.500 5 2.500 9.500zM12.500 11.500C10 6 13 1 17.500 1S24 6 22 9s-5 3.500-9.500 2.500zM12.500 12.500C18 10 23 13 23 17.500S18 24 15 22s-3.500-5-2.500-9.500zM11.500 12.500C14 18 11 23 6.500 23S0 18 2 15s5-3.500 9.500-2.500z" fill="#e6e6e6" />
        </svg>
      </button>
      <button aria-label="安全中心" className={`${slot} border-transparent`}>
        <svg viewBox="0 0 28 28" className="size-7">
          <path d="M17 7.500A9 9 0 1 0 21 16c0-4-3-6-6-5.500s-5 3-4 5.500 5 2.500 5 0-2-2-2-1M8 20c4 3 10 1 11-4M17 7.500c-5-1-9 2-9 7" fill="none" stroke="#ddd" strokeWidth="1.4" />
          <path d="M22 1q4 0 4 6l2 4H16l2-4q0-6 4-6zM20 12h4l-2 2z" fill="#e8a810" />
        </svg>
      </button>
      <button aria-label="Edge" className={`${slot} ml-[3px] border-transparent`}>
        <svg viewBox="0 0 20 20" className="size-5">
          <path d="M1 9C2 3 6 0 11 0c6 0 9 4 9 9v2.500H7c0 5 7 6 11 3.500v4C11 22 3 19 3 12c0-3 2-6 5-7-3 0-6 2-7 4zm6-1h7c0-4-6-5-7 0z" fill="#0a7ad8" />
        </svg>
      </button>
      <button aria-label="应用商店" className={`${slot} border-transparent`}>
        <svg viewBox="0 0 22 24" className="h-6 w-[22px]">
          <path d="M1 7l20-1v15L3 23.500 1 21z" fill="#fff" />
          <path d="M7 7V4q1-3 4-3t4 4" fill="none" stroke="#fff" strokeWidth="1.5" />
          <path d="M6 11l4-.5V14H6zM11.500 10.300l5-.5V14h-5zM6 15.500h4V19l-4-.5zM11.500 15.500h5V20l-5-.7z" fill="#020b0f" />
        </svg>
      </button>
      <button aria-label="资源管理器" className={`${slot} border-transparent`}>
        <svg viewBox="0 0 22 20" className="h-5 w-[22px]">
          <path d="M0 1h8l2 2h12v15H0z" fill="#f7cf67" />
          <path d="M0 6h22v12H0z" fill="#ffe79b" />
          <path d="M4 11h14v8h-4v-4H8v4H4z" fill="#39b3e8" />
        </svg>
      </button>
      <button aria-label="广联达" className="ml-[5px] flex h-10 w-10 shrink-0 items-center justify-center border-b-2 border-[#76b9ed]">
        <svg viewBox="0 0 24 24" className="size-6">
          <path d="M21 1C10-1 2 5 3 13c1 9 12 13 17 7 3-4 2-8-1-10h-7l1 4h3c0 4-8 5-8-1 0-5 5-7 12-6-1-2-2-3-4-3 2 0 4-1 5-3z" fill="#1d9cf0" />
        </svg>
      </button>
      <button aria-label="浏览器" className="ml-[9px] flex h-10 w-10 shrink-0 items-center justify-center border-b-2 border-[#76b9ed]">
        <svg viewBox="0 0 24 24" className="size-6">
          <circle cx="12" cy="12" r="11" fill="#43b02a" />
          <path d="M17 15c-2.500 4-10.500 3-10.500-3s10.500-6 10.500 0h-10" fill="none" stroke="#fff" strokeWidth="2.5" />
        </svg>
      </button>
      <button aria-label="钢筋算量" className={`${slot} ml-[5px] border-[#76b9ed] bg-[#363f43]`}>
        <svg viewBox="0 0 16 16" className="size-6">{icons.app}</svg>
      </button>
      <button aria-label="便签" className="ml-[5px] flex h-10 w-10 shrink-0 items-center justify-center border-b-2 border-[#76b9ed]">
        <svg viewBox="0 0 24 24" className="size-6">
          <rect width="24" height="24" rx="2" fill="#f59a1b" />
          <path d="M4 5h14v16H4z" fill="#fff4d6" />
          <path d="M7 9h8M7 12h8M7 15h6" stroke="#c98524" />
          <path d="M10 15l9-12 3 2-9 12-4 2z" fill="#6b3a12" />
        </svg>
      </button>
      <div className="ml-auto flex h-10 items-center text-center">
        <div className="w-12 leading-[17px] whitespace-nowrap">33%<br />CPU使用</div>
        <svg viewBox="0 0 12 8" className="ml-5 h-2 w-3"><path d="M0 7l6-6 6 6" fill="none" stroke="#fff" strokeWidth="1.3" /></svg>
        <svg viewBox="0 0 16 14" className="ml-[11px] h-[14px] w-4"><path d="M1 1v3M4 1v3M0 4h5v2L2.500 7.500V10H5M6 4.500h8.500v7H5.500V8M15.500 7v2" fill="none" stroke="#fff" /><path d="M8 6h5v4H8z" fill="#fff" /></svg>
        <svg viewBox="0 0 14 14" className="ml-[10px] size-[14px]"><path d="M1 13A12 12 0 0 1 13 1M4 13a9 9 0 0 1 9-9M7 13a6 6 0 0 1 6-6M10 13a3 3 0 0 1 3-3" fill="none" stroke="#d0d0d0" strokeWidth="1.2" /></svg>
        <svg viewBox="0 0 17 14" className="ml-[7px] h-[14px] w-[17px]"><path d="M.5 5h3L7 1.500v11L3.500 9h-3zM9.500 5q1 2 0 4M12 3q2.500 4 0 8M14.500 1q3.500 6 0 12" fill="none" stroke="#fff" /></svg>
        <svg viewBox="0 0 23 13" className="ml-2 h-[13px] w-[23px]"><path d="M.5.5h22v12H.5z" fill="none" stroke="#fff" /><path d="M3 3.500h18M3 6.500h18" stroke="#fff" strokeDasharray="2 1" /><path d="M5 9.500h13" stroke="#fff" /></svg>
        <span className="ml-[10px] text-[13px] font-bold">中</span>
        <svg viewBox="0 0 26 24" className="ml-[13px] h-[17px] w-[18px]">{sogou}</svg>
        <div className="ml-3 w-[66px] leading-[18px]">18:08<br />2017/9/18</div>
        <svg viewBox="0 0 16 16" className="mr-[25px] ml-4 size-4"><path d="M.5 1.500h15v11h-5V15l-3-2.500h-7z" fill="none" stroke="#fff" /></svg>
      </div>
    </div>
  );
}

function Branch({ last }: { last?: boolean }) {
  return (
    <span className="ml-2 flex h-[18px] w-[17px] shrink-0 flex-col">
      <span className="h-[9px] border-b border-l border-[#c0c0c0]" />
      {!last && <span className="h-[9px] border-l border-[#c0c0c0]" />}
    </span>
  );
}

function Toggle({ open }: { open?: boolean }) {
  return (
    <svg viewBox="0 0 13 13" className="mr-1 ml-[2px] size-[13px] shrink-0" aria-hidden="true">
      <path d="M.5.5h12v12H.5z" fill="#fff" stroke="#b0b0b0" />
      <path d={open ? 'M3 6.500h7' : 'M3 6.500h7M6.500 3v7'} stroke="#000" />
    </svg>
  );
}

function ScrollColumn({ lead, thumb }: { lead: string; thumb: string }) {
  return (
    <div className="ml-[2px] flex w-4 shrink-0 flex-col items-center bg-[#f0f0f0]">
      <span className="flex h-[17px] shrink-0 items-center"><Arrow dir="up" /></span>
      <span className={lead} />
      <span className={`w-[15px] bg-[#cdcdcd] ${thumb}`} />
      <span className="mt-auto flex h-3 items-start"><Arrow dir="down" /></span>
    </div>
  );
}

const calcRows: [number, string, string][] = [
  [26, '墙在基础锚固区内右侧水平分布钢筋排数', '间距500'],
  [27, '暗梁/边框梁/梁纵筋与墙水平钢筋的距离在数值范围内不计算水平钢', 's/2'],
  [28, '水平钢筋根数计算方式', '向上取整+1'],
  [29, '垂直钢筋根数计算方式', '向上取整+1'],
  [30, '墙体拉筋根数计算方式', '向上取整+1'],
  [31, '三、四级抗震及非抗震时竖向一级钢筋的端部做法', '180度弯钩'],
  [32, '顶层墙身垂直筋锚固计算起点', '从板底开始计算锚'],
  [33, '端柱满足直锚时，水平筋伸入端柱内的长度', '伸至对边'],
  [34, '洞口加强筋的最小锚固长度', 'lae'],
  [35, '拐角墙中间层水平筋计算方式', '同墙内侧水平筋'],
  [36, '墙身钢筋搭接长度', '按平法图集计算'],
  [37, '一级钢筋末端弯折时带弯勾', '是'],
  [38, '剪力墙与集水坑坑口相交处剪力墙水平筋是否计算', '是'],
  [39, '剪力墙钢筋同间距隔一布一布置时，间距表示', '不同种钢筋之间的'],
];

const cellBase = 'border-r border-b border-[#c0c0c0] p-0 font-normal';
const headCell = `${cellBase} h-[23px] bg-linear-to-b from-white to-[#ececec]`;
const goldCell = `${cellBase} h-[23px] bg-linear-to-b from-[#fbdda4] to-[#eebc58] text-[#5a0050]`;
const numCell = `${cellBase} h-[19px] text-center font-['Liberation_Sans',sans-serif] text-[11px]`;
const numShade = 'bg-linear-to-b from-white to-[#ececec]';
const line = 'flex h-[18px] items-center overflow-hidden whitespace-nowrap';

function CalcDialog() {
  return (
    <section role="dialog" aria-label="计算参数设置" className="absolute top-[154px] left-[73px] w-[554px] border border-[#2b88e6] bg-[#f0f0f0] shadow-[0_4px_14px_rgba(0,0,0,0.45)]">
      <div className="flex h-[30px] items-center bg-white pl-2">
        <Icon name="app" />
        <h2 className="ml-[5px] flex-1">计算参数设置</h2>
        <button aria-label="最小化" className="w-[45px]"><svg viewBox="0 0 11 11" className="mx-auto size-[11px]"><path d="M0 5.500h11" stroke="#c4c4c4" /></svg></button>
        <button aria-label="最大化" className="w-[45px]"><svg viewBox="0 0 11 11" className="mx-auto size-[11px]"><path d="M.5.5h10v10H.5z" fill="none" stroke="#000" /></svg></button>
        <button aria-label="关闭" className="w-[46px]"><svg viewBox="0 0 11 11" className="mx-auto size-[11px]"><path d="M0 0l11 11M11 0L0 11" stroke="#000" /></svg></button>
      </div>
      <div className="px-[3px] pt-[3px]">
        <div className="flex border border-[#a0a0a8] bg-white px-px pt-px pb-[3px]">
          <table className="w-[524px] table-fixed border-separate border-spacing-0 self-start leading-[18px]">
            <colgroup>
              <col className="w-[21px]" />
              <col />
              <col className="w-[102px]" />
            </colgroup>
            <thead>
              <tr>
                <th className={headCell} />
                <th className={headCell}>类型名称</th>
                <th className={goldCell}>设置值</th>
              </tr>
            </thead>
            <tbody>
              {calcRows.map(([no, name, value]) => (
                <tr key={no} className={no === 36 ? 'text-[#808080]' : ''}>
                  <td className={`${numCell} ${numShade} text-black`}>{no}</td>
                  <td className={`${cellBase} bg-[#ffffe1]`}>
                    <div className={line}>
                      <Branch last={no === 39} />
                      <span className="ml-1"><Grid text={name} /></span>
                    </div>
                  </td>
                  <td className={`${cellBase} bg-white ${no === 39 ? 'text-[#0000ff]' : ''}`}>
                    <div className={`${line} pl-[2px]`}><span><Grid text={value} /></span></div>
                  </td>
                </tr>
              ))}
              <tr>
                <td className={`${numCell} ${numShade}`}>40</td>
                <td className={`${cellBase} bg-[#ffffe1] text-[#808080]`}>
                  <div className={line}><Toggle />人防门框墙</div>
                </td>
                <td className={cellBase} />
              </tr>
            </tbody>
          </table>
          <ScrollColumn lead="h-[154px]" thumb="h-[124px]" />
        </div>
        <p className="mt-[5px] leading-4">提示信息：</p>
        <div className="mt-[39px] mr-[10px] mb-2 flex justify-end gap-[15px]">
          <button className="h-6 w-[72px] border border-[#adadad] bg-[#e1e1e1]">确定</button>
          <button className="h-6 w-[72px] border border-[#adadad] bg-[#e1e1e1]">取消</button>
        </div>
      </div>
      <svg viewBox="0 0 142 60" className="pointer-events-none absolute top-[282px] left-[381px] h-[60px] w-[142px]" aria-hidden="true">
        <ellipse cx="71" cy="30" rx="68" ry="28" fill="none" stroke="#ff0000" strokeWidth="3" />
      </svg>
    </section>
  );
}

interface PropRow {
  name: string;
  value?: string;
  kind?: 'key' | 'open' | 'closed' | 'child' | 'last';
}

const propRows: PropRow[] = [
  { name: '名称', value: 'JLQ-11', kind: 'key' },
  { name: '厚度(mm)', value: '250' },
  { name: '轴线距左墙皮距离', value: '(125)' },
  { name: '水平分布钢筋', value: '(2)Ψ8@200', kind: 'key' },
  { name: '垂直分布钢筋', value: '(2)Ψ8/(2)Ψ10@200', kind: 'key' },
  { name: '拉筋', value: 'Φ6@600*600', kind: 'key' },
  { name: '备注' },
  { name: '其它属性', kind: 'open' },
  { name: '其它钢筋', kind: 'child' },
  { name: '汇总信息', value: '剪力墙', kind: 'child' },
  { name: '保护层厚度(mm)', value: '(15)', kind: 'child' },
  { name: '压墙筋', kind: 'child' },
  { name: '纵筋构造', value: '设置插筋', kind: 'child' },
  { name: '插筋信息', kind: 'child' },
  { name: '水平钢筋拐角增', value: '否', kind: 'child' },
  { name: '计算设置', value: '按设定计算设置计算', kind: 'child' },
  { name: '节点设置', value: '按默认节点设置计算', kind: 'child' },
  { name: '搭接设置', value: '按默认搭接设置计算', kind: 'child' },
  { name: '起点顶标高(m)', value: '层顶标高(-0.03)', kind: 'child' },
  { name: '终点顶标高(m)', value: '层顶标高(-0.03)', kind: 'child' },
  { name: '起点底标高(m)', value: '基础底标高(-3.5)', kind: 'child' },
  { name: '终点底标高(m)', value: '基础底标高(-3.5)', kind: 'last' },
  { name: '锚固搭接', kind: 'closed' },
];

function PropertyEditor() {
  const selected = 15;
  return (
    <section aria-label="属性编辑器" className="absolute top-[104px] left-[839px] w-[281px] border-x border-b border-[#b4b4b4] bg-white shadow-[0_3px_10px_rgba(0,0,0,0.35)]">
      <div className="flex h-[31px] items-center justify-between border-b border-[#a0a0a8] pl-[7px] text-[#8d8d8d]">
        <h2>属性编辑器</h2>
        <button aria-label="关闭" className="size-[19px] bg-[#e3e3e3] text-[10px] leading-4 text-white">x</button>
      </div>
      <div className="flex p-px">
        <table className="w-[259px] table-fixed border-separate border-spacing-0 leading-[18px]">
          <colgroup>
            <col className="w-[21px]" />
            <col />
            <col className="w-[117px]" />
          </colgroup>
          <thead>
            <tr>
              <th className={headCell} />
              <th className={headCell}>属性名称</th>
              <th className={goldCell}>属性值</th>
            </tr>
          </thead>
          <tbody>
            {propRows.map(({ name, value = '', kind }, i) => {
              const on = i === selected;
              const nested = kind === 'child' || kind === 'last';
              const group = kind === 'open' || kind === 'closed';
              return (
                <tr key={name}>
                  <td className={`${numCell} ${on ? 'bg-[#fcd28a] text-[#5a0050]' : numShade}`}>{i + 1}</td>
                  <td className={`${cellBase} ${on ? 'bg-[#0078d7] text-white' : ''}`}>
                    <div className={`${line} ${kind === 'key' ? 'text-[#0000ff]' : ''} ${group ? 'text-[#808080]' : ''}`}>
                      {nested && <Branch last={kind === 'last'} />}
                      {group && <Toggle open={kind === 'open'} />}
                      <span className={nested ? 'ml-1' : group ? '' : 'ml-5'}><Grid text={name} /></span>
                    </div>
                  </td>
                  <td className={`${cellBase} ${on ? 'bg-[#dbe9f8]' : ''}`}>
                    <div className={`${line} pl-[2px]`}><span><Grid text={value} /></span></div>
                  </td>
                </tr>
              );
            })}
          </tbody>
        </table>
        <ScrollColumn lead="h-0" thumb="h-[363px]" />
      </div>
      <svg viewBox="0 0 158 38" className="pointer-events-none absolute top-[118px] left-[123px] h-[38px] w-[158px]" aria-hidden="true">
        <ellipse cx="79" cy="19" rx="76" ry="16" fill="none" stroke="#ff0000" strokeWidth="3" />
      </svg>
    </section>
  );
}

function FloatingTools() {
  return (
    <>
      <div className="absolute -top-[30px] left-[574px] flex size-[47px] items-end justify-center rounded-full border border-[#8a8a8a] bg-[#45c15a] pb-[2px] text-[11px] leading-4 font-bold text-white shadow-md">71</div>
      <div className="absolute top-[10px] left-[776px] flex h-6 w-[170px] items-center border border-[#b5cbe0] bg-white text-[#1e6fc0]">
        <svg viewBox="0 0 26 24" className="-ml-[14px] h-[26px] w-7 shrink-0">{sogou}</svg>
        <span className="ml-1 text-sm font-bold">英</span>
        <svg viewBox="0 0 12 12" className="ml-[10px] size-3"><circle cx="3" cy="3" r="2" fill="#1e6fc0" /><path d="M8 6h3q0 4-3 5 1-2 0-5z" fill="#1e6fc0" /></svg>
        <svg viewBox="0 0 12 16" className="ml-2 h-4 w-3"><rect x="3.5" width="5" height="9" rx="2.5" fill="#1e6fc0" /><path d="M1 6q0 6 5 6t5-6M6 12v3M3 15h6" fill="none" stroke="#1e6fc0" strokeWidth="1.5" /></svg>
        <svg viewBox="0 0 16 12" className="ml-2 h-3 w-4"><rect x=".8" y=".8" width="14.4" height="10.4" rx="1" fill="none" stroke="#1e6fc0" strokeWidth="1.5" /><path d="M3 3.500h10M3 6h10" stroke="#1e6fc0" strokeWidth="1.3" strokeDasharray="2 1" /><path d="M5 8.800h6" stroke="#1e6fc0" strokeWidth="1.3" /></svg>
        <svg viewBox="0 0 16 14" className="ml-2 h-[14px] w-4"><circle cx="7" cy="3" r="3" fill="#a9b4c6" /><path d="M0 13q0-6 7-6v6z" fill="#a9b4c6" /><path d="M9 8v5M11 8.500h4l-2 4.500" fill="none" stroke="#8e9bb2" strokeWidth="1.5" /></svg>
        <svg viewBox="0 0 16 14" className="ml-1 h-[14px] w-4"><path d="M4 1q4 3 8 0l4 3-2 3-2-1v8H4V6L2 7 0 4z" fill="#1e6fc0" /></svg>
        <svg viewBox="0 0 16 16" className="ml-[7px] size-4"><path d="M2 14l7-7" stroke="#1e6fc0" strokeWidth="3.5" strokeLinecap="round" /><path d="M13 1l-3 3 2 2 3-2.500q1 4-2 5T8 7t0-4 5-2z" fill="#1e6fc0" /></svg>
      </div>
    </>
  );
}

export default function App() {
  return (
    <div className="relative flex h-screen flex-col overflow-hidden bg-[#f0f0f0] font-['Open_Sans','Noto_Sans_CJK_SC',sans-serif] text-xs text-black">
      <TitleBar />
      <MenuBar />
      <MainToolbar />
      <div className="flex min-h-0 flex-1">
        <NavPanel />
        <main className="flex min-w-0 flex-1 flex-col">
          <DrawToolbars />
          <Drawing />
          <SnapToolbar />
        </main>
      </div>
      <StatusBar />
      <Taskbar />
      <PropertyEditor />
      <CalcDialog />
      <FloatingTools />
    </div>
  );
}
